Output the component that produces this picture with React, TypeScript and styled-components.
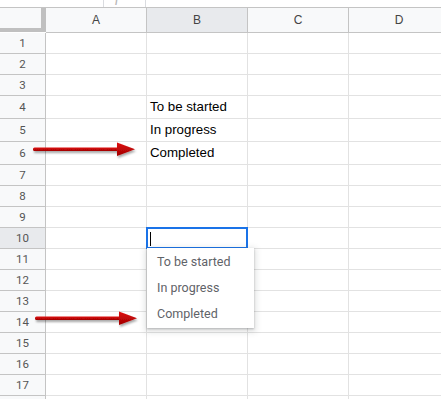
import React from 'react';
import styled, { createGlobalStyle } from 'styled-components';

const GlobalStyle = createGlobalStyle`
  html, body {
    margin: 0;
    padding: 0;
    background: #ffffff;
    overflow: hidden;
  }
  body {
    font-family: Arial, "Liberation Sans", sans-serif;
  }
`;

const COLS = ['A', 'B', 'C', 'D'];
const ROW_HEIGHTS = [21, 21, 21, 23, 23, 23, 21, 21, 21, 21, 21, 21, 21, 21, 21, 21, 21, 21];
const CELL_TEXT: Record<number, string> = {
  4: 'To be started',
  5: 'In progress',
  6: 'Completed',
};
const OPTIONS = ['To be started', 'In progress', 'Completed'];
const ACTIVE_ROW = 10;
const ACTIVE_COL = 'B';
const LAST_LABELLED_ROW = 17;

const Page = styled.div`
  position: relative;
  width: 441px;
  height: 399px;
  overflow: hidden;
  background: #fff;
`;

const TopStrip = styled.div`
  display: flex;
  height: 7px;
`;

const FxBox = styled.div`
  margin-left: 103px;
  width: 43px;
  border-left: 1px solid #dadce0;
  border-right: 1px solid #dadce0;
  overflow: hidden;
  display: flex;
  padding-left: 11px;
  box-sizing: border-box;
`;

const FxGlyph = styled.span`
  font-family: "Liberation Serif", serif;
  font-style: italic;
  font-size: 16px;
  line-height: 16px;
  color: #b8b8b8;
  margin-top: -12px;
`;

const Row = styled.div<{ $h: number }>`
  display: flex;
  height: ${(p) => p.$h}px;
`;

const HeaderRow = styled(Row)`
  border-top: 1px solid #c4c4c4;
`;

const Corner = styled.div`
  flex: 0 0 41px;
  background: #f8f9fa;
  border-right: 5px solid #c0c0c0;
  border-bottom: 4px solid #c0c0c0;
  box-sizing: content-box;
  height: 20px;
`;

const ColHeader = styled.div<{ $active?: boolean; $w: number }>`
  flex: 0 0 ${(p) => p.$w}px;
  box-sizing: border-box;
  display: flex;
  align-items: center;
  justify-content: center;
  background: ${(p) => (p.$active ? '#e8eaed' : '#f8f9fa')};
  border-right: 1px solid #c4c4c4;
  border-bottom: 1px solid #c4c4c4;
  font-size: 12px;
  color: #444;
`;

const RowHeader = styled.div<{ $active?: boolean }>`
  flex: 0 0 46px;
  box-sizing: border-box;
  display: flex;
  align-items: center;
  justify-content: center;
  background: ${(p) => (p.$active ? '#e8eaed' : '#f8f9fa')};
  border-right: 1px solid #c4c4c4;
  border-bottom: 1px solid #c4c4c4;
  font-family: Roboto, Arial, sans-serif;
  font-size: 11.5px;
  color: #555;
`;

const Cell = styled.div<{ $w: number }>`
  position: relative;
  flex: 0 0 ${(p) => p.$w}px;
  box-sizing: border-box;
  display: flex;
  align-items: center;
  padding: 0 3px 2px 3px;
  border-right: 1px solid #e2e2e2;
  border-bottom: 1px solid #e2e2e2;
  font-family: Arial, "Liberation Sans", sans-serif;
  font-size: 13.3px;
  color: #000;
  white-space: nowrap;
`;

const Editor = styled.div`
  position: absolute;
  left: -1px;
  top: -1px;
  width: 102px;
  height: 22px;
  box-sizing: border-box;
  border: 2px solid #1a73e8;
  background: #fff;
  z-index: 2;
`;

const Caret = styled.div`
  position: absolute;
  left: 2px;
  top: 3px;
  width: 1px;
  height: 14px;
  background: #000;
`;

const Dropdown = styled.div`
  position: absolute;
  left: -1px;
  top: 19px;
  width: 107px;
  padding: 0 0 2px 0;
  background: #fff;
  box-shadow: 0 2px 6px 2px rgba(60, 64, 67, 0.15), 0 1px 2px rgba(60, 64, 67, 0.3);
  z-index: 3;
`;

const Option = styled.div`
  height: 26px;
  display: flex;
  align-items: center;
  padding-left: 10px;
  font-family: Roboto, Arial, sans-serif;
  font-size: 12.5px;
  color: #5f6368;
`;

const ArrowWrap = styled.svg<{ $x: number; $y: number }>`
  position: absolute;
  left: ${(p) => p.$x}px;
  top: ${(p) => p.$y}px;
  overflow: visible;
  z-index: 4;
`;

const Arrow: React.FC<{ x: number; y: number; id: string }> = ({ x, y, id }) => (
  <ArrowWrap $x={x} $y={y} width={104} height={18} viewBox="0 0 104 18">
    <defs>
      <linearGradient id={`g${id}`} x1="0" y1="0" x2="0" y2="1">
        <stop offset="0" stopColor="#e01010" />
        <stop offset="1" stopColor="#a00000" />
      </linearGradient>
      <filter id={`s${id}`} x="-10%" y="-50%" width="120%" height="220%">
        <feDropShadow dx="1" dy="2" stdDeviation="1.2" floodColor="#000" floodOpacity="0.35" />
      </filter>
    </defs>
    <g filter={`url(#s${id})`}>
      <rect x="0" y="6.5" width="86" height="3.5" rx="1.5" fill={`url(#g${id})`} />
      <path d="M84 1.5 L102 8.3 L84 15 Z" fill={`url(#g${id})`} />
    </g>
  </ArrowWrap>
);

const App: React.FC = () => {
  return (
    <Page>
      <GlobalStyle />
      <TopStrip>
        <FxBox>
          <FxGlyph>f</FxGlyph>
        </FxBox>
      </TopStrip>
      <HeaderRow $h={25}>
        <Corner />
        {COLS.map((c) => (
          <ColHeader key={c} $w={101} $active={c === ACTIVE_COL}>
            {c}
          </ColHeader>
        ))}
      </HeaderRow>
      {ROW_HEIGHTS.map((h, i) => {
        const r = i + 1;
        return (
          <Row key={r} $h={h}>
            <RowHeader $active={r === ACTIVE_ROW}>{r <= LAST_LABELLED_ROW ? r : ''}</RowHeader>
            {COLS.map((c) => (
              <Cell key={c} $w={101}>
                {c === 'B' && CELL_TEXT[r]}
                {c === ACTIVE_COL && r === ACTIVE_ROW && (
                  <Editor>
                    <Caret />
                    <Dropdown>
                      {OPTIONS.map((o) => (
                        <Option key={o}>{o}</Option>
                      ))}
                    </Dropdown>
                  </Editor>
                )}
              </Cell>
            ))}
          </Row>
        );
      })}
      <Arrow id="a1" x={33} y={141} />
      <Arrow id="a2" x={35} y={310} />
    </Page>
  );
};

export default App;
